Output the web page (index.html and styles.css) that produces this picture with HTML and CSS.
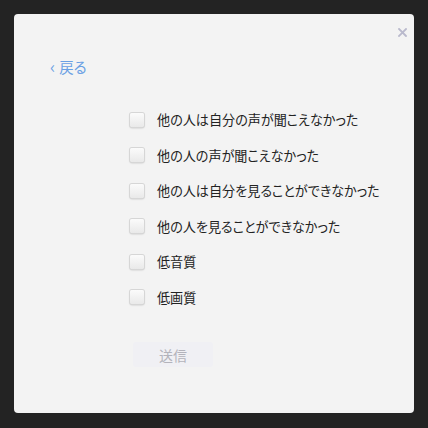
FILE: index.html
```html
<!DOCTYPE html>
<html lang="ja">
<head>
<meta charset="utf-8">
<link rel="stylesheet" href="styles.css">
</head>
<body>
<div class="modal">
  <button class="close" aria-label="close">
    <svg width="9" height="9" viewBox="0 0 9 9"><path d="M1 1L8 8M8 1L1 8" stroke="#b9b9cc" stroke-width="1.8" stroke-linecap="square"/></svg>
  </button>
  <a class="back"><span class="chev">‹</span>戻る</a>
  <div class="options">
    <label class="opt"><span class="box"></span><span>他の人は自分の声が聞こえなかった</span></label>
    <label class="opt"><span class="box"></span><span>他の人の声が聞こえなかった</span></label>
    <label class="opt"><span class="box"></span><span>他の人は自分を見ることができなかった</span></label>
    <label class="opt"><span class="box"></span><span>他の人を見ることができなかった</span></label>
    <label class="opt"><span class="box"></span><span>低音質</span></label>
    <label class="opt"><span class="box"></span><span>低画質</span></label>
  </div>
  <div class="actions"><button class="send">送信</button></div>
</div>
</body>
</html>
```
FILE: styles.css
```css
html, body {
  margin: 0;
  padding: 0;
  background: #232323;
  height: 100%;
}
body {
  padding: 14px;
  box-sizing: border-box;
  font-family: "Noto Sans CJK JP", "Noto Sans", sans-serif;
}
.modal {
  position: relative;
  width: 400px;
  height: 399px;
  background: #f3f3f3;
  border-radius: 4px;
  box-sizing: border-box;
  padding: 45px 0 0 36px;
  display: flex;
  flex-direction: column;
}
.close {
  position: absolute;
  top: 14px;
  right: 7px;
  border: 0;
  background: none;
  padding: 0;
  width: 9px;
  height: 9px;
  display: block;
}
.close svg { display: block; }
.back {
  color: #6aa0e4;
  font-size: 14.5px;
  line-height: 16px;
  display: flex;
  align-items: center;
  gap: 4px;
  height: 16px;
  font-feature-settings: "palt";
}
.chev {
  font-size: 17px;
  line-height: 16px;
  position: relative;
  top: -1px;
}
.options {
  display: flex;
  flex-direction: column;
  gap: 16.6px;
  margin: 35px 0 0 80px;
}
.opt {
  display: flex;
  align-items: center;
  gap: 13px;
  height: 19px;
  font-size: 13.1px;
  color: #222;
  font-feature-settings: "palt";
}
.box {
  width: 14px;
  height: 14px;
  border-radius: 2px;
  background: linear-gradient(#fbfbfb, #e9e9e9);
  box-shadow: 0 0 0 1px #d6d6d6, 0 1px 2px rgba(0,0,0,0.25);
  flex: none;
}
.actions {
  margin: 35px 0 0 83px;
}
.send {
  width: 80px;
  height: 25px;
  border: 0;
  border-radius: 3px;
  background: #f0f0f4;
  color: #b3b3bb;
  font-family: inherit;
  font-size: 14px;
  padding: 0;
}
```
